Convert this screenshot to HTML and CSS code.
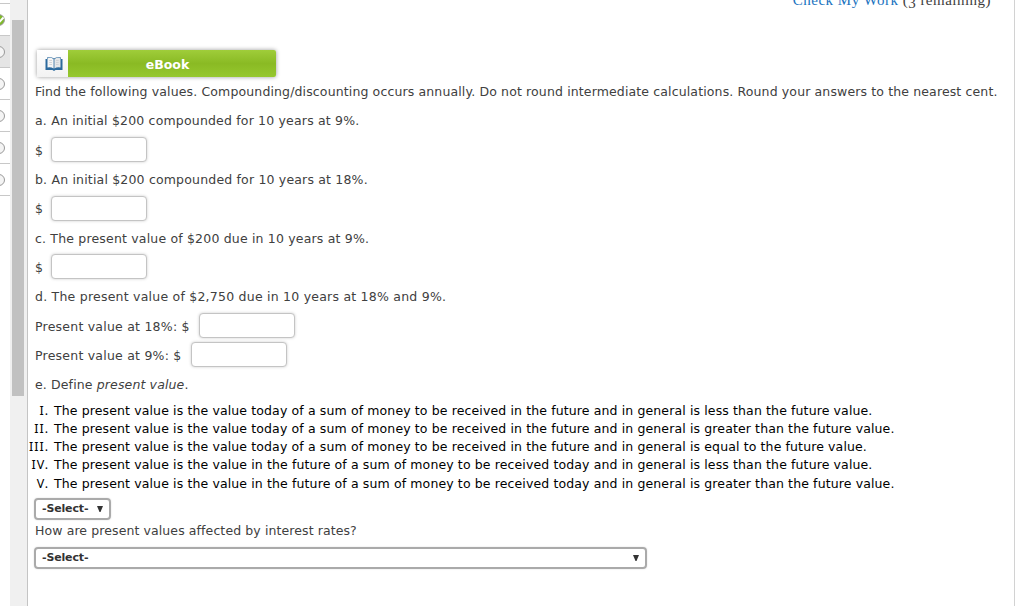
FILE: index.html
```html
<!DOCTYPE html>
<html lang="en">
<head>
<meta charset="utf-8">
<title>Time Value of Money</title>
<link rel="stylesheet" href="styles.css">
</head>
<body>
<div class="page">
  <nav class="steps">
    <div class="step first"><svg class="dot" viewBox="0 0 12 12"><circle cx="6" cy="6" r="5.4" fill="#7fba2a" stroke="#9a9a9a"/><path d="M5 9.500L10.500 3.500" fill="none" stroke="#fff" stroke-width="2"/></svg></div>
    <div class="step active"><i class="dot ring"></i></div>
    <div class="step"><i class="dot ring"></i></div>
    <div class="step"><i class="dot ring"></i></div>
    <div class="step"><i class="dot ring"></i></div>
    <div class="step"><i class="dot ring"></i></div>
  </nav>
  <div class="scroll"><div class="thumb"></div></div>
  <main class="main">
    <div class="top"><div class="check"><a class="link">Check My Work</a> (<span class="old">3</span> remaining)</div></div>
    <div class="ebook">
      <div class="book"><svg width="18" height="16" viewBox="0 0 18 16"><path d="M.5 3H2V1.500Q6 .5 9 2.500Q12 .5 16 1.500V3H17.500V14H10.500L9 15L7.500 14H.5Z" fill="#2c6a9e"/><path d="M2.500 2.200Q6 1.200 8.600 3.200V12.500Q6 10.800 2.500 11.500Z" fill="#f5f5f5"/><path d="M15.500 2.200Q12 1.200 9.400 3.200V12.500Q12 10.800 15.500 11.500Z" fill="#e4e6e8"/><path d="M4.300 4.500H7M4.300 6.500H7M4.300 8.500H7M11 4.500H13.700M11 6.500H13.700M11 8.500H13.700" stroke="#c9cdd2" stroke-width=".8"/></svg></div>
      <div class="bar">eBook</div>
    </div>
    <div class="row intro">Find the following values. Compounding/discounting occurs annually. Do not round intermediate calculations. Round your answers to the nearest cent.</div>
    <div class="row">a. An initial $200 compounded for 10 years at 9%.</div>
    <div class="row">$<input class="box gap"></div>
    <div class="row">b. An initial $200 compounded for 10 years at 18%.</div>
    <div class="row">$<input class="box gap"></div>
    <div class="row">c. The present value of $200 due in 10 years at 9%.</div>
    <div class="row">$<input class="box gap"></div>
    <div class="row wide">d. The present value of $2,750 due in 10 years at 18% and 9%.</div>
    <div class="row wide"><span class="label18">Present value at 18%: $</span><input class="box"></div>
    <div class="row wide"><span class="label9">Present value at 9%: $</span><input class="box"></div>
    <div class="row intro">e. Define&nbsp;<em>present value</em>.</div>
    <div class="list">
      <div class="item"><span class="num">I.</span><span>The present value is the value today of a sum of money to be received in the future and in general is less than the future value.</span></div>
      <div class="item"><span class="num">II.</span><span>The present value is the value today of a sum of money to be received in the future and in general is greater than the future value.</span></div>
      <div class="item"><span class="num">III.</span><span>The present value is the value today of a sum of money to be received in the future and in general is equal to the future value.</span></div>
      <div class="item"><span class="num">IV.</span><span>The present value is the value in the future of a sum of money to be received today and in general is less than the future value.</span></div>
      <div class="item"><span class="num">V.</span><span>The present value is the value in the future of a sum of money to be received today and in general is greater than the future value.</span></div>
    </div>
    <div class="select short"><span>-Select-</span><svg width="6" height="6" viewBox="0 0 6 6"><path d="M0 0H6L3.500 6H2.500Z" fill="#333"/></svg></div>
    <div class="question">How are present values affected by interest rates?</div>
    <div class="select long"><span>-Select-</span><svg width="6" height="6" viewBox="0 0 6 6"><path d="M0 0H6L3.500 6H2.500Z" fill="#333"/></svg></div>
  </main>
</div>
</body>
</html>
```
FILE: styles.css
```css
* { box-sizing: border-box; }
body { margin: 0; background: #fff; overflow: hidden; font-family: Verdana, "DejaVu Sans", sans-serif; font-size: 12.5px; color: #404040; }
.page { display: flex; height: 606px; }
.steps { width: 10px; overflow: hidden; flex: none; padding-top: 3px; }
.step { height: 32px; border-bottom: 1px solid #c8c8c8; display: flex; align-items: center; }
.step.first { height: 33px; border-top: 1px solid #c8c8c8; }
.active { background: #e5e5e5; }
.dot { width: 12px; height: 12px; flex: none; margin-left: -7px; }
.ring { border: 1px solid #999; border-radius: 50%; background: #f4f4f4; }
.scroll { width: 17px; flex: none; background: #f0f0f0; padding: 20px 3px 0 2px; }
.thumb { height: 376px; background: #c1c1c1; }
.main { width: 988px; flex: none; border-left: 1px solid #c4c4c4; border-right: 1px solid #d2d2d2; padding-left: 7px; }
.top { height: 50px; display: flex; justify-content: flex-end; }
.check { margin-top: -10px; margin-right: 23px; font: 15px/20px "Liberation Serif", serif; letter-spacing: .48px; white-space: nowrap; }
.old { position: relative; top: 3px; }
.link { color: #1a73c0; }
.ebook { display: flex; width: 239px; height: 27px; margin-left: 2px; border-radius: 2px; box-shadow: 0 0 4px #999; }
.book { width: 31px; display: flex; align-items: center; justify-content: center; padding-left: 2px; background: linear-gradient(#fff, #f2f2f2); }
.bar { flex: 1; background: linear-gradient(#9fcd3a, #8aba24 50%, #96c82e); color: #fff; font-weight: bold; text-align: center; line-height: 29px; padding-right: 9px; border-radius: 0 2px 2px 0; }
.row { height: 29.300px; display: flex; align-items: center; white-space: nowrap; letter-spacing: .18px; }
.row.intro { letter-spacing: .134px; }
.row.wide { letter-spacing: .23px; }
.box { width: 96px; height: 25px; border: 1.500px solid #c4c4c4; border-radius: 4px; background: #fff; margin: 0 0 1px; padding: 0; box-shadow: 0 0 3px #ccc; }
.gap { margin-left: 8px; }
.label18 { width: 164px; }
.label9 { width: 155.500px; }
.list { padding-top: 2.500px; color: #000; margin-left: -7px; letter-spacing: .125px; }
.item { display: flex; height: 18.200px; line-height: 18.200px; white-space: nowrap; }
.num { width: 21px; margin-right: 5px; display: flex; justify-content: flex-end; font-family: "Noto Sans", sans-serif; letter-spacing: 1px; }
.select { height: 22px; border: 2px solid #aaa; border-radius: 4px; display: flex; align-items: center; justify-content: space-between; padding: 0 6px; font-weight: bold; font-size: 11px; letter-spacing: -.15px; color: #333; box-shadow: 0 0 2px #ddd; margin-left: -1px; }
.short { width: 77px; margin-top: 5px; }
.question { height: 27px; line-height: 22px; letter-spacing: .1px; }
.long { width: 613px; }
```
